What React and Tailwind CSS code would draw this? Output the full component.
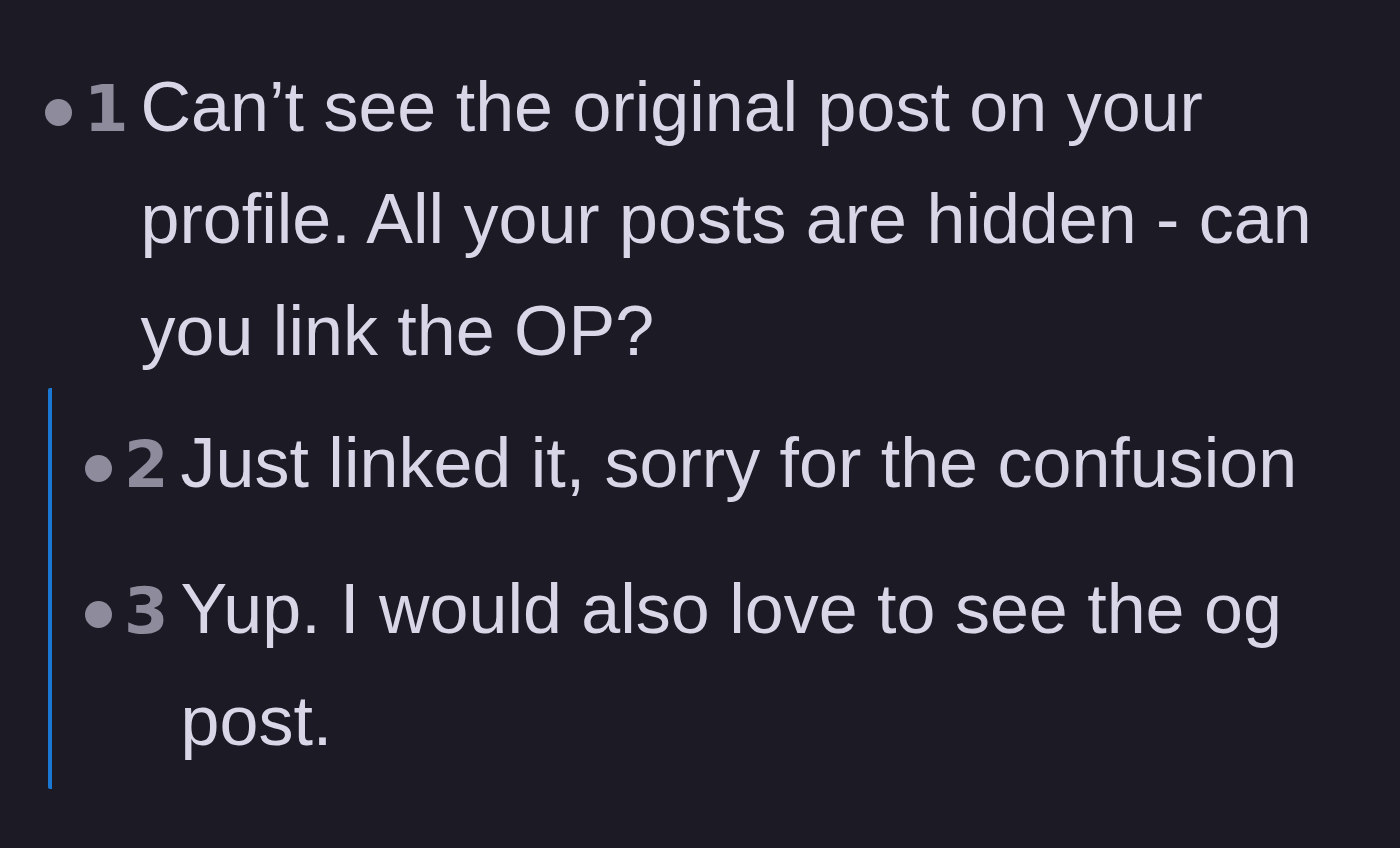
import React from 'react'

const rows = [
  { n: '1', text: 'Can’t see the original post on your profile. All your posts are hidden - can you link the OP?' },
]

const replies = [
  { n: '2', text: 'Just linked it, sorry for the confusion' },
  { n: '3', text: 'Yup. I would also love to see the og post.' },
]

function Item({ n, text }) {
  return (
    <div className="flex items-start">
      {/* bullet */}
      <div className="h-[112px] flex items-center shrink-0">
        <span className="mt-[11px] w-[27px] h-[27px] rounded-full bg-[#8e8b9c]" />
      </div>
      <div className="flex-1 flex items-baseline">
        <span className="ml-[12px] shrink-0 font-['DejaVu_Sans',sans-serif] font-bold text-[64px] leading-[112px] text-[#8e8b9c]">
          {n}
        </span>
        <p className="ml-[12px] flex-1 text-[70px] leading-[112px] text-[#d9d6e8]">{text}</p>
      </div>
    </div>
  )
}

export default function App() {
  return (
    <div className="min-h-screen w-full bg-[#1c1a25] font-['Liberation_Sans',Arial,sans-serif] pl-[45px] pr-[45px] pt-[51px]">
      {rows.map(r => <Item key={r.n} {...r} />)}
      {/* replies thread */}
      <div className="mt-px ml-[3px] border-l-4 border-[#1a78d2] rounded-[2px] pl-[33px] pt-[19px] pb-[12px] flex flex-col gap-[32px]">
        {replies.map(r => <Item key={r.n} {...r} />)}
      </div>
    </div>
  )
}
